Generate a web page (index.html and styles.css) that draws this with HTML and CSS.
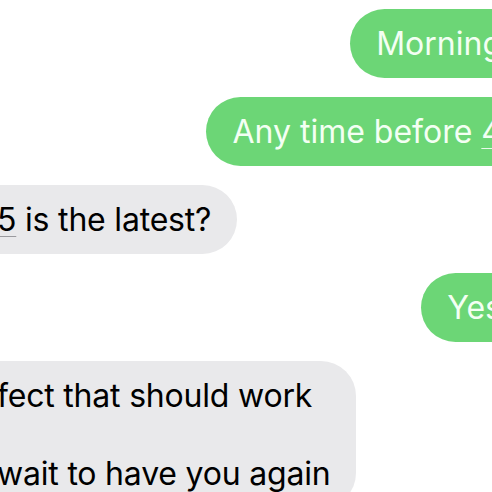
FILE: index.html
```html
<!DOCTYPE html>
<html lang="en">
<head>
<meta charset="UTF-8" />
<title>Messages</title>
<link rel="stylesheet" href="styles.css">
</head>
<body>

<div class="thread">
  <div class="row out">
    <div class="bubble sent">Morning</div>
  </div>
  <div class="row out">
    <div class="bubble sent">Any time before <span class="link">4</span></div>
  </div>
  <div class="row in">
    <div class="bubble received"><span class="link">5</span> is the latest?</div>
  </div>
  <div class="row out">
    <div class="bubble sent">Yes</div>
  </div>
  <div class="row in">
    <div class="bubble received">fect that should work<br><br>wait to have you again</div>
  </div>
</div>

</body>
</html>
```

FILE: styles.css
```css
html, body {
  margin: 0;
  overflow: hidden;
  background: #fff;
}
body {
  font-family: Inter, "Liberation Sans", sans-serif;
  font-size: 32px;
  line-height: 39px;
}

/* the screenshot is cropped: the thread runs past both edges */
.thread {
  margin: 0 -36px 0 -43px;
  padding-top: 9px;
  display: flex;
  flex-direction: column;
  gap: 19px;
}
.row {
  display: flex;
}
.row.out {
  justify-content: flex-end;
}
.bubble {
  padding: 15px 26px;
  border-radius: 35px;
  max-width: 75%;
}
.sent {
  background: #6cd676;
  color: #f3fff3;
}
.received {
  padding-left: 40px;
  background: #e9e9eb;
  color: #000;
  letter-spacing: -0.2px;
}
.link {
  text-decoration: underline;
  text-underline-offset: 5px;
  text-decoration-thickness: 1px;
}
.sent .link {
  text-decoration-color: rgba(255, 255, 255, 0.85);
}
.received .link {
  text-decoration-color: #9a9a9e;
}
```
